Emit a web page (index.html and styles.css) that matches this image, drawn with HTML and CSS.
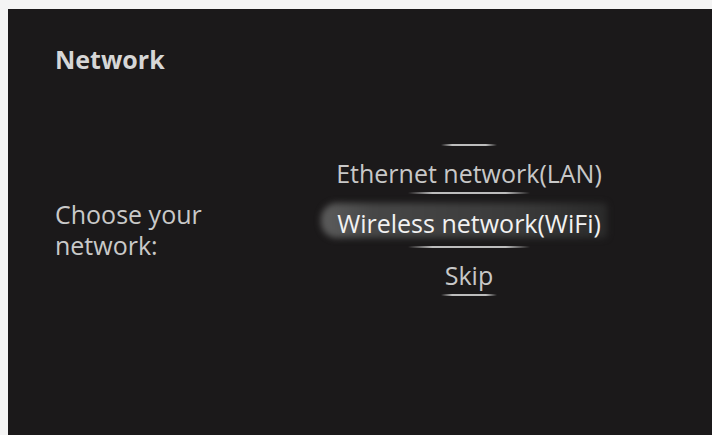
FILE: index.html
```html
<!DOCTYPE html>
<html lang="en">
  <head>
    <meta charset="UTF-8" />
    <meta name="viewport" content="width=device-width, initial-scale=1.0" />
    <title>Network</title>

    <link rel="stylesheet" href="styles.css">
  </head>
  <body>
    <div class="screen">
      <h1 class="title">Network</h1>

      <div class="setup">
        <p class="prompt">Choose your<br />network:</p>

        <ul class="choices">
          <li class="rule rule-end"></li>
          <li class="choice">Ethernet network(LAN)</li>
          <li class="rule"></li>
          <li class="choice selected">Wireless network(WiFi)</li>
          <li class="rule"></li>
          <li class="choice">Skip</li>
          <li class="rule rule-end"></li>
        </ul>
      </div>
    </div>
  </body>
</html>
```

FILE: styles.css
```css
html,
body {
  margin: 0;
  height: 100%;
  background: #f4f4f4;
}

body {
  padding: 9px 0 0 8px;
  box-sizing: border-box;
  font-family: "Open Sans", "Noto Sans", sans-serif;
}

.screen {
  height: 100%;
  background: #1b191a;
  padding: 34px 79px 0 47px;
  box-sizing: border-box;
  color: #cfcfcf;
}

.title {
  margin: 0;
  font-size: 25px;
  font-weight: 700;
  line-height: 32px;
  color: #d6d6d6;
}

.setup {
  display: grid;
  grid-template-columns: 250px 1fr;
  margin-top: 69px;
}

.prompt {
  margin: 55px 0 0;
  font-size: 25px;
  line-height: 31px;
  color: #c9c9c9;
}

.choices {
  list-style: none;
  margin: 0;
  padding: 0;
  display: flex;
  flex-direction: column;
  align-items: center;
}

.choice {
  position: relative;
  padding: 10px 0 2px;
  font-size: 25px;
  line-height: 34px;
  white-space: nowrap;
  color: #c8c8c8;
}

.choice.selected {
  padding: 12px 0 6px;
  color: #f2f2f2;
  z-index: 1;
  isolation: isolate;
}

/* soft glow band behind the focused entry */
.choice.selected::before {
  content: "";
  position: absolute;
  left: -16px;
  right: -6px;
  top: 9px;
  bottom: 8px;
  border-radius: 16px 4px 4px 16px;
  background: linear-gradient(90deg, #5c5c5c 0%, #474747 18%, #3a3a3a 70%, #2a2a2a 100%);
  filter: blur(3px);
  z-index: -1;
}

.rule {
  width: 122px;
  height: 2px;
  background: linear-gradient(90deg, rgba(190, 190, 190, 0), #bdbdbd 20%, #bdbdbd 80%, rgba(190, 190, 190, 0));
}

.rule-end {
  width: 56px;
}
```
